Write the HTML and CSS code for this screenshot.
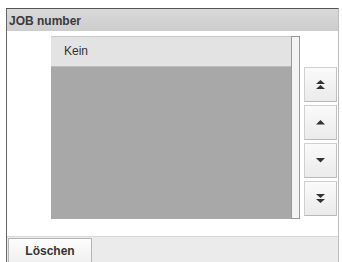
FILE: index.html
```html
<!DOCTYPE html>
<html>
<head>
<meta charset="utf-8">
<link rel="stylesheet" href="styles.css">
</head>
<body>
<div class="win">
  <div class="title">JOB number</div>
  <div class="content">
    <div class="list">
      <div class="row">Kein</div>
    </div>
    <div class="scroll"></div>
    <div class="btns">
      <div class="btn"><svg width="9" height="10" viewBox="0 0 9 10"><path d="M4.5 0L9 4H0Z M4.5 5L9 9H0Z" fill="#333"/></svg></div>
      <div class="btn"><svg width="9" height="5" viewBox="0 0 9 5"><path d="M4.5 0L9 4.5H0Z" fill="#333"/></svg></div>
      <div class="btn"><svg width="9" height="5" viewBox="0 0 9 5"><path d="M0 0H9L4.5 4.5Z" fill="#333"/></svg></div>
      <div class="btn"><svg width="9" height="10" viewBox="0 0 9 10"><path d="M0 0H9L4.5 4Z M0 5H9L4.5 9Z" fill="#333"/></svg></div>
    </div>
  </div>
  <div class="bottom">
    <div class="del">Löschen</div>
  </div>
</div>
</body>
</html>
```
FILE: styles.css
```css
html, body { margin: 0; padding: 0; background: #fff; }
body { font-family: "Liberation Sans", Arial, sans-serif; width: 342px; height: 262px; overflow: hidden; }
.win {
  margin: 8px 3px 0 6px;
  height: 254px;
  border-top: 1px solid #555;
  border-left: 1px solid #666;
  border-right: 1px solid #bdbdbd;
  display: flex;
  flex-direction: column;
  box-sizing: border-box;
}
.title {
  height: 22px;
  background: linear-gradient(#d9d9d9, #cdcdcd);
  font-size: 12px;
  font-weight: bold;
  color: #3a3a3a;
  line-height: 24px;
  padding-left: 2px;
  flex: none;
}
.content {
  flex: 1;
  display: flex;
  padding: 5px 0 0 44px;
  align-items: flex-start;
}
.list {
  width: 240px;
  height: 183px;
  background: #a8a8a8;
  border-top: 1px solid #c8c8c8;
  box-sizing: border-box;
}
.row {
  height: 29px;
  background: #e3e3e3;
  border-bottom: 1px solid #bdbdbd;
  font-size: 12px;
  color: #333;
  line-height: 29px;
  padding-left: 13px;
}
.scroll {
  width: 9px;
  height: 183px;
  box-sizing: border-box;
  background: #f4f4f4;
  border: 1px solid #9a9a9a;
}
.btns {
  margin-left: 4px;
  margin-top: 31px;
  display: flex;
  flex-direction: column;
  gap: 3px;
}
.btn {
  width: 33px;
  height: 35px;
  box-sizing: border-box;
  border: 1px solid #d0d0d0;
  border-bottom-color: #b8b8b8;
  border-right-color: #c0c0c0;
  background: linear-gradient(#fafafa, #ebebeb);
  display: flex;
  align-items: center;
  justify-content: center;
}
.bottom {
  height: 25px;
  flex: none;
  background: #ebebeb;
  border-top: 1px solid #d8d8d8;
  padding-left: 1px;
  display: flex;
}
.del {
  width: 84px;
  box-sizing: border-box;
  margin-top: 1px;
  border: 1px solid #b5b5b5;
  border-bottom: none;
  background: linear-gradient(#fdfdfd, #f0f0f0);
  font-size: 12px;
  font-weight: bold;
  color: #333;
  text-align: center;
  line-height: 24px;
}
```
